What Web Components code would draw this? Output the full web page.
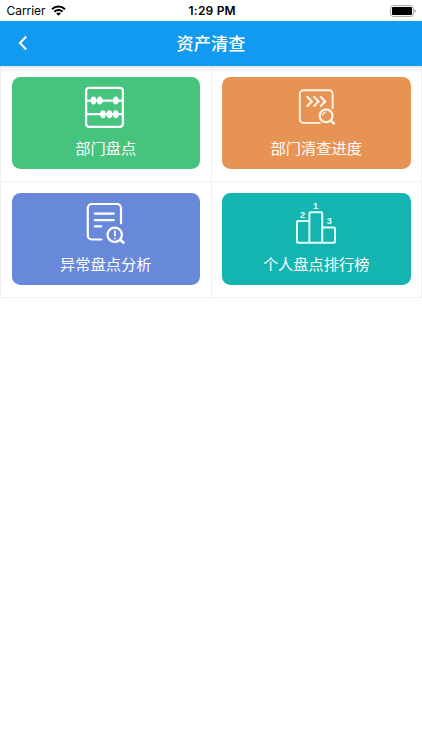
<!DOCTYPE html>
<html lang="zh-CN">
<head>
<meta charset="utf-8">
<meta name="viewport" content="width=device-width, initial-scale=1">
<title>资产清查</title>
<style>
  body {
    margin: 0;
    background: #fff;
    font-family: Inter, "Noto Sans CJK SC", sans-serif;
  }
</style>
</head>
<body>
<asset-app></asset-app>

<script>
(function () {
  'use strict';

  // All icons share a 70x50 canvas, the artwork sits slightly right of its middle.
  const ICONS = {
    abacus: `
      <g fill="none" stroke="#fff" stroke-width="2.3">
        <rect x="16.3" y="7.8" width="36.8" height="39" rx="3"/>
        <path d="M16 20.6h37M16 34.2h37"/>
      </g>
      <g fill="#fff">
        <ellipse cx="23.7" cy="20.4" rx="2.8" ry="4"/>
        <ellipse cx="30" cy="20.4" rx="2.8" ry="4"/>
        <ellipse cx="46" cy="20.4" rx="2.8" ry="4"/>
        <ellipse cx="33.2" cy="34.2" rx="2.8" ry="4"/>
        <ellipse cx="39.6" cy="34.2" rx="2.8" ry="4"/>
        <ellipse cx="46" cy="34.2" rx="2.8" ry="4"/>
      </g>`,
    progress: `
      <g fill="none" stroke="#fff5e8" stroke-width="1.9" stroke-linecap="round" stroke-linejoin="round">
        <path d="M52.8 28V13.8a3.5 3.5 0 0 0-3.5-3.5H23.6a3.5 3.5 0 0 0-3.5 3.5v25.6a3.5 3.5 0 0 0 3.5 3.5H40"/>
        <path d="M27 16.2l5 5.2-5 5.2M33.7 16.2l5 5.2-5 5.2M40.4 16.2l5 5.2-5 5.2" stroke-width="2.2" stroke-linecap="butt" stroke-linejoin="miter"/>
        <circle cx="46.3" cy="35.7" r="6.4" stroke-width="2.2"/>
        <path d="M42.9 35.1a3.6 3.6 0 0 1 2.8-2.9" stroke-width="1.5"/>
        <path d="M51 40.5l3.2 3.2" stroke-width="2.5"/>
      </g>`,
    report: `
      <g fill="none" stroke="#fff" stroke-width="2.2" stroke-linecap="round">
        <path d="M51.2 27.3V12a4 4 0 0 0-4-4H22a4 4 0 0 0-4 4v27.5a4 4 0 0 0 4 4h9.7"/>
        <path d="M25 17.7h19M25 24.1h19M25 30.3h6.5"/>
        <circle cx="44.9" cy="38.8" r="7.2"/>
        <path d="M50.4 43.8l3.2 2.8" stroke-width="2.7"/>
        <path d="M45.1 35v4.6M45.1 42.5v.1" stroke-width="1.7"/>
      </g>`,
    ranking: `
      <g fill="none" stroke="#e2ffff" stroke-width="2" stroke-linejoin="round">
        <path d="M29.6 25.1H18.2a1 1 0 0 0-1 1v19.6a1 1 0 0 0 1 1h36a1 1 0 0 0 1-1V32.6a1 1 0 0 0-1-1H42.4"/>
        <path d="M29.6 46.5V17.2a1 1 0 0 1 1-1h10.8a1 1 0 0 1 1 1v29.3"/>
      </g>
      <g fill="#e2ffff" font-family="Liberation Sans, sans-serif" font-weight="700" font-size="9.2" text-anchor="middle">
        <text x="35.7" y="13">1</text>
        <text x="22.7" y="22">2</text>
        <text x="49.6" y="28">3</text>
      </g>`
  };

  class PhoneStatus extends HTMLElement {
    constructor() {
      super();
      this.attachShadow({ mode: 'open' }).innerHTML = `
        <style>
          :host {
            display: grid;
            grid-template-columns: 1fr auto 1fr;
            align-items: center;
            height: 21px;
            padding: 0 5px 0 6.5px;
            box-sizing: border-box;
            font-size: 12px;
            line-height: 22px;
            color: #000;
          }
          .left { display: flex; align-items: center; gap: 5.5px; letter-spacing: -0.05px; }
          .left svg { margin-bottom: 2px; }
          .time { padding-left: 1px; font-weight: 600; letter-spacing: 0.2px; }
          .battery { justify-self: end; }
          svg { display: block; }
        </style>
        <div class="left">
          <span>Carrier</span>
          <svg width="15" height="11" viewBox="0 0 15 11" fill="none" stroke="#000" stroke-width="2">
            <path d="M1 4.2a9.3 9.3 0 0 1 13 0"/>
            <path d="M3.4 6.8a5.8 5.8 0 0 1 8.2 0"/>
            <path d="M7.5 10.8L5.2 8.5a3.3 3.3 0 0 1 4.6 0z" fill="#000" stroke="none"/>
          </svg>
        </div>
        <div class="time">1:29 PM</div>
        <svg class="battery" width="27" height="12" viewBox="0 0 27 12">
          <rect x=".6" y=".6" width="22.8" height="10.8" rx="2.6" fill="#fff" stroke="#a5a5a5"/>
          <rect x="2" y="2" width="20" height="8" rx="1" fill="#000"/>
          <path d="M24.6 4.2c1.8.6 1.8 3 0 3.6z" fill="#999"/>
        </svg>`;
    }
  }

  class NavHeader extends HTMLElement {
    constructor() {
      super();
      this.attachShadow({ mode: 'open' }).innerHTML = `
        <style>
          :host {
            display: grid;
            grid-template-columns: 46px 1fr 46px;
            align-items: center;
            height: 44.5px;
            background: #119af0;
            box-shadow: 0 1px 3px rgba(0, 0, 0, 0.16);
            color: #fff;
          }
          svg { display: block; margin-left: 16.5px; }
          .title {
            padding-top: 1px;
            text-align: center;
            font-size: 17.2px;
            line-height: 24px;
            font-weight: 500;
          }
        </style>
        <svg width="12" height="16" viewBox="0 0 12 16" fill="none" stroke="#fff" stroke-width="2.2">
          <path d="M9.2 1.4L3 8l6.2 6.6"/>
        </svg>
        <div class="title"><slot></slot></div>`;
    }
  }

  class MenuTile extends HTMLElement {
    constructor() {
      super();
      this.attachShadow({ mode: 'open' });
    }

    connectedCallback() {
      this.shadowRoot.innerHTML = `
        <style>
          :host {
            display: block;
            box-sizing: border-box;
            height: 116px;
            padding: 11.2px 10.5px 0 10.5px;
            border-right: 1.5px solid #f1f1f2;
            border-bottom: 1.5px solid #f1f1f2;
          }
          .card {
            display: flex;
            flex-direction: column;
            align-items: center;
            height: 92.5px;
            padding-top: 3.3px;
            box-sizing: border-box;
            border-radius: 8.5px;
            background: var(--tile-color);
            color: #fff;
          }
          svg { display: block; flex: none; }
          .label {
            margin-top: 7px;
            font-size: 15.25px;
            line-height: 24px;
            font-weight: 400;
          }
        </style>
        <div class="card">
          <svg width="70" height="50" viewBox="1.2 0 70 50">${ICONS[this.getAttribute('icon')] || ''}</svg>
          <div class="label"><slot></slot></div>
        </div>`;
    }
  }

  class AssetApp extends HTMLElement {
    constructor() {
      super();
      this.attachShadow({ mode: 'open' }).innerHTML = `
        <style>
          :host { display: block; min-height: 750px; background: #fff; }
          nav-header { position: relative; z-index: 1; }
          .grid {
            display: grid;
            grid-template-columns: 210.5px 210.5px;
            border-left: 1px solid #f1f1f2;
          }
          .green { --tile-color: #46c37d; }
          .orange { --tile-color: #e79354; }
          .indigo { --tile-color: #6888da; }
          .teal { --tile-color: #14b5b1; }
        </style>
        <phone-status></phone-status>
        <nav-header>资产清查</nav-header>
        <div class="grid">
          <menu-tile class="green" icon="abacus">部门盘点</menu-tile>
          <menu-tile class="orange" icon="progress">部门清查进度</menu-tile>
          <menu-tile class="indigo" icon="report">异常盘点分析</menu-tile>
          <menu-tile class="teal" icon="ranking">个人盘点排行榜</menu-tile>
        </div>`;
    }
  }

  customElements.define('phone-status', PhoneStatus);
  customElements.define('nav-header', NavHeader);
  customElements.define('menu-tile', MenuTile);
  customElements.define('asset-app', AssetApp);
})();
</script>
</body>
</html>
